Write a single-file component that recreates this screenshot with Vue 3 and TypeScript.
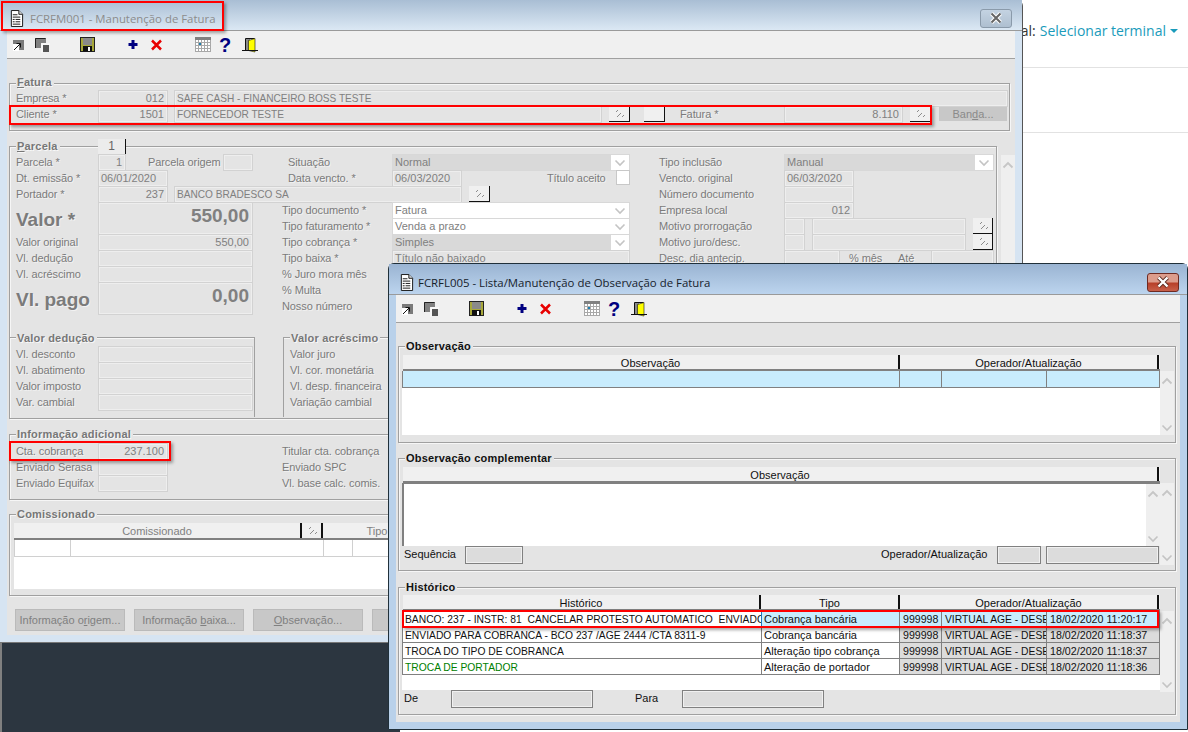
<script setup lang="ts">
import { h } from 'vue'

type Cell = { k: string; w: number; m?: number; t?: string; r?: boolean; grey?: boolean; u?: string; z?: string }
type Row = { big?: boolean; cells: Cell[] }

const L = (t: string, w: number, m = 0): Cell => ({ k: 'lbl', t, w, m })
const F = (t: string, w: number, m = 0, r = false): Cell => ({ k: 'fld', t, w, m, r })
const D = (w: number, m = 0): Cell => ({ k: 'fld dark', w, m })
const S = (t: string, w: number, grey = false): Cell => ({ k: 'sel', t, w, grey })
const B = (m = 0, w = 21): Cell => ({ k: 'pick', w, m })
const R = (...cells: Cell[]): Row => ({ cells })
const Big = (...cells: Cell[]): Row => ({ big: true, cells })
const isCaps = (t = '') => /[A-Z]{2}/.test(t) && t === t.toUpperCase()

function renderCell(c: Cell) {
  const style = { width: c.w + 'px', marginLeft: (c.m ?? 0) + 'px' }
  if (c.k === 'sel') {
    return h('span', { class: ['sel', { grey: c.grey }], style }, [
      h('span', { class: 'sel-txt' }, c.t),
      h('span', { class: 'sel-arrow' }, [h('svg', { width: 12, height: 8 }, [h('use', { href: '#chev-down' })])]),
    ])
  }
  if (c.k === 'pick') {
    return h('span', { class: 'pick', style }, [h('svg', { width: 12, height: 12 }, [h('use', { href: '#hatch' })])])
  }
  if (c.k === 'blank') return h('span', { class: 'pick', style })
  if (c.k === 'check') return h('span', { class: 'check', style })
  if (c.k === 'cmd') return h('span', { class: 'cmd', style }, [c.t, h('u', c.u), c.z])
  return h('span', { class: [c.k, { right: c.r, caps: isCaps(c.t) }], style }, c.t)
}

const FormRows = (p: { rows: Row[] }) =>
  p.rows.map((row) => h('div', { class: ['row', { big: row.big }] }, row.cells.map(renderCell)))

const fatura: Row[] = [
  R(L('Empresa *', 82), F('012', 70, 0, true), F('SAFE CASH - FINANCEIRO BOSS TESTE', 834, 6)),
  R(
    L('Cliente *', 82), F('1501', 70, 0, true), F('FORNECEDOR TESTE', 428, 6), B(7),
    { k: 'blank', w: 21, m: 14 }, L('Fatura *', 104, 15), F('8.110', 119, 0, true), B(7),
    { k: 'cmd', w: 68, m: 8, t: 'Ban', u: 'd', z: 'a...' },
  ),
]
const parcelaTop: Row[] = [
  R(L('Parcela *', 82), F('1', 28, 0, true), L('Parcela origem', 75, 22), F('', 30), L('Situação', 104, 35), S('Normal', 238, true)),
  R(L('Dt. emissão *', 82), F('06/01/2020', 70), L('Data vencto. *', 104, 120), F('06/03/2020', 70), L('Título aceito', 69, 85), { k: 'check', w: 14 }),
  R(L('Portador *', 82), F('237', 70, 0, true), F('BANCO BRADESCO SA', 288, 6), B(7)),
]
const parcelaLeft: Row[] = [
  Big({ k: 'lbl', t: 'Valor *', w: 82 }, F('550,00', 155, 0, true)),
  R(L('Valor original', 82), F('550,00', 155, 0, true)),
  R(L('Vl. dedução', 82), F('', 155)),
  R(L('Vl. acréscimo', 82), F('', 155)),
  Big({ k: 'lbl', t: 'Vl. pago', w: 82 }, F('0,00', 155, 0, true)),
]
const parcelaMid: Row[] = [
  R(L('Tipo documento *', 110), S('Fatura', 238)),
  R(L('Tipo faturamento *', 110), S('Venda a prazo', 238)),
  R(L('Tipo cobrança *', 110), S('Simples', 238, true)),
  R(L('Tipo baixa *', 110), F('Título não baixado', 238)),
  R(L('% Juro mora mês', 110), F('', 70)),
  R(L('% Multa', 110), F('', 70)),
  R(L('Nosso número', 110), F('', 120)),
]
const parcelaRight: Row[] = [
  R(L('Tipo inclusão', 125), S('Manual', 210, true)),
  R(L('Vencto. original', 125), F('06/03/2020', 70)),
  R(L('Número documento', 125), F('', 70)),
  R(L('Empresa local', 125), F('012', 70, 0, true)),
  R(L('Motivo prorrogação', 125), F('', 21), F('', 154, 7), B(7, 20)),
  R(L('Motivo juro/desc.', 125), F('', 21), F('', 154, 7), B(7, 20)),
  R(L('Desc. dia antecip.', 125), F('', 56), L('% mês', 49, 9), L('Até', 33), F('', 63)),
]
const deducao: Row[] = [
  R(L('Vl. desconto', 82), F('', 155)),
  R(L('Vl. abatimento', 82), F('', 155)),
  R(L('Valor imposto', 82), F('', 155)),
  R(L('Var. cambial', 82), F('', 155)),
]
const acrescimo: Row[] = [
  R(L('Valor juro', 103), F('', 155)),
  R(L('Vl. cor. monetária', 103), F('', 155)),
  R(L('Vl. desp. financeira', 103), F('', 155)),
  R(L('Variação cambial', 103), F('', 155)),
]
const info: Row[] = [
  R(L('Cta. cobrança', 82), F('237.100', 70, 0, true), L('Titular cta. cobrança', 110, 114), F('', 200)),
  R(L('Enviado Serasa', 82), F('', 70), L('Enviado SPC', 110, 114), F('', 70)),
  R(L('Enviado Equifax', 82), F('', 70), L('Vl. base calc. comis.', 110, 114), F('', 70)),
]
const seqRow: Row[] = [R(L('Sequência', 61, 2), D(58), L('Operador/Atualização', 116, 358), D(44), D(113, 5))]
const deRow: Row[] = [R(L('De', 47, 2), D(142), L('Para', 47, 42), D(142))]

const tools = [
  { id: 'i-in', m: 0 },
  { id: 'i-cascade', m: 0 },
  { id: 'i-save', m: 23 },
  { id: 'i-plus', m: 22 },
  { id: 'i-x', m: 1 },
  { id: 'i-cal', m: 23 },
  { id: 'i-help', m: -1 },
  { id: 'i-door', m: 2 },
]

const hist = [
  { a: 'BANCO: 237 - INSTR: 81  CANCELAR PROTESTO AUTOMATICO  ENVIADO', b: 'Cobrança bancária', c: '999998', d: 'VIRTUAL AGE - DESE', e: '18/02/2020 11:20:17', sel: true },
  { a: 'ENVIADO PARA COBRANCA - BCO 237 /AGE 2444 /CTA 8311-9', b: 'Cobrança bancária', c: '999998', d: 'VIRTUAL AGE - DESE', e: '18/02/2020 11:18:37' },
  { a: 'TROCA DO TIPO DE COBRANCA', b: 'Alteração tipo cobrança', c: '999998', d: 'VIRTUAL AGE - DESE', e: '18/02/2020 11:18:37' },
  { a: 'TROCA DE PORTADOR', b: 'Alteração de portador', c: '999998', d: 'VIRTUAL AGE - DESE', e: '18/02/2020 11:18:36', green: true },
]
</script>

<template>
  <div class="desk">
    <svg class="defs" width="0" height="0">
      <symbol id="hatch" viewBox="0 0 12 12"><path d="M3 4l2-2M4 9l4-4M9 9l2-2" stroke="#8c8c8c" fill="none" /></symbol>
      <symbol id="chev-down" viewBox="0 0 12 8"><path d="M1.5 1.5L6 6l4.5-4.5" stroke="#c4c4c4" stroke-width="1.600" fill="none" /></symbol>
      <symbol id="chev-up" viewBox="0 0 12 8"><path d="M1.5 6.5L6 2l4.5 4.5" stroke="#c6c6c6" stroke-width="1.800" fill="none" /></symbol>
      <symbol id="doc" viewBox="0 0 16 18">
        <path d="M2.5 .5h8l4 4v13h-12z" fill="#fff" stroke="#111" />
        <path d="M10.5 .5v4h4" fill="#ddd" stroke="#111" />
        <path d="M4 5h5M4 7.5h8M4 10h2M7 10h5M4 12.500h2M7 12.500h5M4 15h8" stroke="#111" />
      </symbol>
      <symbol id="i-in" viewBox="0 0 16 16">
        <rect x="2" y="3" width="11" height="10" fill="#7a7a7a" />
        <rect x="2" y="7" width="6" height="7" fill="#fff" />
        <path d="M3 13l6-6M5.500 6.500H9.500V10.500" stroke="#111" fill="none" />
      </symbol>
      <symbol id="i-cascade" viewBox="0 0 16 16">
        <path d="M1 1h11v5H7v5H1z" fill="#808080" />
        <path d="M1.500 11V1.500h10" stroke="#222" fill="none" />
        <rect x="9" y="8" width="6" height="7" fill="#555" />
        <path d="M8 16V7h8" stroke="#fff" fill="none" />
      </symbol>
      <symbol id="i-save" viewBox="0 0 16 16">
        <rect x=".5" y=".5" width="14" height="14" fill="#a8a83a" stroke="#222" />
        <rect x="3" y="1" width="9" height="7" fill="#8a8a8a" />
        <rect x="3" y="9" width="9" height="5.500" fill="#111" />
        <rect x="8" y="10" width="2" height="4" fill="#fff" />
      </symbol>
      <symbol id="i-plus" viewBox="0 0 16 16"><path d="M8 3v9M3.500 7.500h9" stroke="#000080" stroke-width="3" fill="none" /></symbol>
      <symbol id="i-x" viewBox="0 0 16 16"><path d="M3 3.500l9 9M12 3.500l-9 9" stroke="#e80000" stroke-width="2.500" fill="none" /></symbol>
      <symbol id="i-cal" viewBox="0 0 16 16">
        <rect x="0" y="0" width="16" height="15" fill="#fff" />
        <rect x="0" y="0" width="16" height="3" fill="#808080" />
        <path d="M.5 3v12M3.500 3v12M6.500 3v12M9.500 3v12M12.500 3v12M15.500 3v12M0 5.500h16M0 8.500h16M0 11.500h16M0 14.500h16" stroke="#a8a8a8" fill="none" />
        <rect x="4" y="6" width="2" height="2" fill="#1a7fb0" />
      </symbol>
      <symbol id="i-door" viewBox="0 0 16 16">
        <path d="M3.500 13V1.500h9" stroke="#111" fill="none" />
        <rect x="4" y="2" width="4" height="11" fill="#8a8a8a" />
        <path d="M6.500 3.500l6.500-2V15l-6.500-1.500z" fill="#ffff00" stroke="#111" stroke-width=".6" />
        <path d="M0 13.500h16" stroke="#111" fill="none" />
      </symbol>
    </svg>

    <div class="page">
      <div class="page-row top">
        <span class="term-label">Terminal:</span>
        <span class="term-link">Selecionar terminal</span>
        <span class="caret"></span>
      </div>
      <div class="page-row second"></div>
    </div>
    <div class="dock"></div>

    <!-- back window -->
    <section class="win back">
      <header class="title">
        <svg class="doc-icon" width="15" height="17"><use href="#doc" /></svg>
        <span class="title-text">FCRFM001 - Manutenção de Fatura</span>
        <button class="close">
          <svg width="16" height="12" viewBox="0 0 16 12">
            <path d="M3.500 1.500l9 9M12.500 1.500l-9 9" stroke="#fff" stroke-width="4" fill="none" />
            <path d="M3.500 1.500l9 9M12.500 1.500l-9 9" stroke="#666" stroke-width="2" fill="none" />
          </svg>
        </button>
      </header>
      <div class="toolbar">
        <span v-for="t in tools" :key="t.id" class="tool" :style="{ marginLeft: t.m + 'px' }">
          <span v-if="t.id === 'i-help'" class="help">?</span>
          <svg v-else width="16" height="16"><use :href="'#' + t.id" /></svg>
        </span>
      </div>
      <div class="client">
        <div class="group fatura">
          <span class="legend"><u>F</u>atura</span>
          <FormRows :rows="fatura" />
        </div>

        <div class="parcela-wrap">
          <div class="group parcela">
            <span class="legend"><u>P</u>arcela</span>
            <span class="tab">1</span>
            <div class="parcela-cols">
              <div class="parcela-main">
                <FormRows :rows="parcelaTop" />
                <div class="parcela-lower">
                  <div class="col-left"><FormRows :rows="parcelaLeft" /></div>
                  <div class="col-mid"><FormRows :rows="parcelaMid" /></div>
                </div>
              </div>
              <div class="col-right"><FormRows :rows="parcelaRight" /></div>
            </div>
            <div class="subs">
              <div class="sub deducao">
                <span class="legend">Valor dedução</span>
                <FormRows :rows="deducao" />
              </div>
              <div class="sub acrescimo">
                <span class="legend">Valor acréscimo</span>
                <FormRows :rows="acrescimo" />
              </div>
            </div>
          </div>
          <div class="vscroll back-scroll">
            <svg width="12" height="8"><use href="#chev-up" /></svg>
          </div>
        </div>

        <div class="group info">
          <span class="legend">Informação adicional</span>
          <FormRows :rows="info" />
        </div>

        <div class="group comis">
          <span class="legend">Comissionado</span>
          <div class="comis-head">
            <span class="ch-name">Comissionado</span>
            <span class="ch-pick"><svg width="12" height="12"><use href="#hatch" /></svg></span>
            <span class="ch-tipo">Tipo</span>
          </div>
          <div class="comis-body">
            <div class="comis-row"><span></span><span></span><span></span><span></span></div>
          </div>
        </div>

        <div class="cmds">
          <button class="cmd-btn">Informação o<u>r</u>igem...</button>
          <button class="cmd-btn">Informação <u>b</u>aixa...</button>
          <button class="cmd-btn"><u>O</u>bservação...</button>
          <button class="cmd-btn">Informação...</button>
        </div>
      </div>
      <i class="mark m-title"></i>
      <i class="mark m-client"></i>
      <i class="mark m-cta"></i>
    </section>

    <!-- front window -->
    <section class="win front">
      <header class="title">
        <svg class="doc-icon" width="15" height="17"><use href="#doc" /></svg>
        <span class="title-text">FCRFL005 - Lista/Manutenção de Observação de Fatura</span>
        <button class="close">
          <svg width="16" height="12" viewBox="0 0 16 12">
            <path d="M3.500 1.500l9 9M12.500 1.500l-9 9" stroke="#5a2a20" stroke-width="4" fill="none" />
            <path d="M3.500 1.500l9 9M12.500 1.500l-9 9" stroke="#fff" stroke-width="2.400" fill="none" />
          </svg>
        </button>
      </header>
      <div class="toolbar">
        <span v-for="t in tools" :key="t.id" class="tool" :style="{ marginLeft: t.m + 'px' }">
          <span v-if="t.id === 'i-help'" class="help">?</span>
          <svg v-else width="16" height="16"><use :href="'#' + t.id" /></svg>
        </span>
      </div>
      <div class="client">
        <div class="group obs">
          <span class="legend">Observação</span>
          <div class="grid-wrap">
            <div class="grid">
              <div class="thead">
                <span class="th t-fill">Observação</span>
                <span class="th t-op">Operador/Atualização</span>
              </div>
              <div class="tr sel-row obs-row">
                <span class="td t-fill"></span><span class="td c-code"></span><span class="td c-name"></span><span class="td c-date"></span>
              </div>
              <div class="grid-white obs-white"></div>
            </div>
            <div class="vscroll">
              <svg width="12" height="8"><use href="#chev-up" /></svg>
              <svg width="12" height="8"><use href="#chev-down" /></svg>
            </div>
          </div>
        </div>

        <div class="group comp">
          <span class="legend">Observação complementar</span>
          <div class="grid-wrap">
            <div class="grid">
              <div class="thead"><span class="th t-all">Observação</span></div>
              <div class="memo">
                <div class="memo-scroll vscroll">
                  <svg width="12" height="8"><use href="#chev-up" /></svg>
                  <svg width="12" height="8"><use href="#chev-down" /></svg>
                </div>
              </div>
              <FormRows :rows="seqRow" />
            </div>
            <div class="vscroll">
              <svg width="12" height="8"><use href="#chev-up" /></svg>
              <svg width="12" height="8"><use href="#chev-down" /></svg>
            </div>
          </div>
        </div>

        <div class="group histo">
          <span class="legend">Histórico</span>
          <div class="grid-wrap">
            <div class="grid">
              <div class="thead">
                <span class="th t-hist">Histórico</span>
                <span class="th t-tipo">Tipo</span>
                <span class="th t-op">Operador/Atualização</span>
              </div>
              <div v-for="r in hist" :key="r.e + r.b" class="tr" :class="{ 'sel-row': r.sel, green: r.green }">
                <span class="td c-hist">{{ r.a }}</span>
                <span class="td c-tipo">{{ r.b }}</span>
                <span class="td c-code ro">{{ r.c }}</span>
                <span class="td c-name ro">{{ r.d }}</span>
                <span class="td c-date ro">{{ r.e }}</span>
              </div>
              <div class="grid-white histo-white"></div>
              <FormRows :rows="deRow" />
              <i class="mark m-row"></i>
            </div>
            <div class="vscroll histo-scroll">
              <svg width="12" height="8"><use href="#chev-up" /></svg>
              <svg width="12" height="8"><use href="#chev-down" /></svg>
            </div>
          </div>
        </div>
      </div>
    </section>
  </div>
</template>

<style scoped>
.desk {
  position: relative;
  width: 1188px;
  height: 732px;
  overflow: hidden;
  background: #fff;
  font-family: "Liberation Sans", Arial, sans-serif;
  font-size: 11px;
}
.defs { position: absolute; }
.page-row { border-bottom: 1px solid #e2e2e2; display: flex; align-items: center; justify-content: flex-end; }
.page-row.top { height: 68px; padding: 0 10px 6px 0; box-sizing: border-box; font: 14px "Open Sans", sans-serif; }
.page-row.second { height: 64px; }
.term-label { color: #333; margin-right: 4px; }
.term-link { color: #1a9bbb; }
.caret { width: 0; height: 0; margin-left: 4px; border: 4px solid transparent; border-top: 4px solid #1a9bbb; border-bottom: 0; }
.dock { position: absolute; left: 0; top: 642px; width: 400px; height: 90px; background: #2c3640; border-left: 2px solid #808080; box-sizing: border-box; }

.win { position: absolute; box-sizing: border-box; display: flex; flex-direction: column; }
.win.back { left: 0; top: 0; width: 1023px; height: 643px; background: #d6e4f2; border-right: 1px solid #555; border-bottom: 1px solid #777; border-top-right-radius: 6px; }
.win.front { left: 388px; top: 263px; width: 800px; height: 467px; background: #b9d1ea; border: 1px solid #20303a; border-radius: 6px 6px 0 0; }

.title { flex: none; display: flex; align-items: center; box-sizing: border-box; border-bottom: 1px solid #9a9a9a; padding-top: 6px; }
.back .title { height: 31px; padding-left: 9px; padding-right: 10px; background: linear-gradient(#a9bed4, #dbe8f4); }
.front .title { height: 31px; padding-left: 10px; padding-right: 8px; background: linear-gradient(#9ab4d2, #bcd4ee); }
.title-text { flex: 1; margin-left: 6px; font: 11.400px "Open Sans", sans-serif; }
.back .title-text { color: #8c8c8c; }
.front .title-text { color: #16222c; margin-left: 4px; }
.close { width: 32px; height: 19px; padding: 0; display: flex; align-items: center; justify-content: center; border-radius: 3px; }
.back .close { background: linear-gradient(#c4d3e2, #aebfd0); border: 1px solid #8a9aaa; }
.front .close { background: linear-gradient(#dc9c8c 0 45%, #b8402a 55%, #c8604a); border: 1px solid #6e2a22; }

.toolbar { flex: none; height: 28px; margin: 0 7px; box-sizing: border-box; padding: 6px 0 0 4px; display: flex; background: #f0f0f0; border-bottom: 1px solid #a0a0a0; }
.tool { flex: none; width: 16px; height: 16px; margin-right: 7px; display: block; }
.tool svg { display: block; }
.help { display: block; font: bold 20px/16px "Liberation Sans", sans-serif; color: #000080; text-align: center; }

.client { flex: 1; min-height: 0; margin: 0 7px 7px; padding-left: 2px; background: #e4e4e4; position: relative; }

.group { position: relative; box-sizing: border-box; border: 1px solid #a0a0a0; box-shadow: inset 1px 1px 0 #f6f6f6, 1px 1px 0 #f6f6f6; }
.legend { position: absolute; top: -8px; left: 6px; padding: 0 2px 0 1px; background: #e4e4e4; font: bold 11px/14px "Liberation Sans", sans-serif; letter-spacing: .2px; white-space: nowrap; }
.sub .legend { top: -7px; }
.fatura .legend { top: -9px; }
.back .legend { color: #777; text-shadow: 1px 1px 0 #f8f8f8; }
.front .legend { color: #111; }

.fatura { width: 1001px; height: 48px; margin-top: 24px; padding: 6px 0 0 6px; }
.parcela-wrap { display: flex; margin-top: 15px; }
.parcela { width: 988px; height: 273px; padding: 7px 0 0 6px; }
.tab { position: absolute; left: 88px; top: -8px; width: 28px; height: 15px; box-sizing: border-box; background: #ececec; border-right: 1px solid #111; color: #666; text-align: center; line-height: 15px; font-size: 12px; }
.parcela-cols { display: flex; }
.parcela-main { width: 614px; flex: none; }
.parcela-lower { display: flex; }
.col-left { width: 266px; flex: none; }
.col-mid { width: 348px; flex: none; }
.col-right { margin-left: 29px; flex: none; width: 335px; }
.subs { display: flex; margin: 23px 0 0 -6px; }
.sub { position: relative; height: 80px; box-sizing: border-box; padding: 8px 0 0 6px; border-top: 1px solid #a0a0a0; box-shadow: inset 0 1px 0 #f6f6f6; }
.deducao { width: 245px; border-right: 1px solid #a0a0a0; }
.acrescimo { margin-left: 28px; width: 500px; border-left: 1px solid #a0a0a0; }
.back-scroll { margin: 9px 0 0 4px; width: 14px; height: 120px; justify-content: flex-start; }

.info { width: 1001px; height: 66px; margin-top: 15px; padding: 8px 0 0 6px; }
.comis { width: 1001px; height: 82px; margin-top: 14px; padding: 8px 0 0 4px; }
.comis-head { display: flex; height: 15px; background: #f0f0f0; border-bottom: 2px solid #808080; box-sizing: content-box; margin-right: 4px; color: #808080; line-height: 16px; text-align: center; }
.ch-name { width: 286px; }
.ch-pick { width: 19px; border-left: 2px solid #111; border-right: 2px solid #111; display: flex; align-items: center; justify-content: center; }
.ch-tipo { width: 108px; }
.comis-body { height: 49px; background: #fff; margin-right: 4px; }
.comis-row { display: flex; height: 17px; border: 1px solid #d0d0d0; border-top: 0; box-sizing: border-box; }
.comis-row span { border-right: 1px solid #d0d0d0; }
.comis-row span:nth-child(1) { width: 55px; }
.comis-row span:nth-child(2) { width: 252px; }
.comis-row span:nth-child(3) { width: 28px; }
.comis-row span:nth-child(4) { width: 100px; }

.cmds { display: flex; gap: 9px; margin: 13px 0 0 6px; }
.cmd-btn { flex: none; width: 110px; height: 22px; padding: 0; background: #c8c8c8; border: 1px solid #bababa; color: #808080; font: 11px "Liberation Sans", sans-serif; }

.mark { position: absolute; box-sizing: border-box; border: 2px solid #f00; box-shadow: 2px 2px 3px rgba(0, 0, 0, .35); pointer-events: none; }
.m-title { left: 1px; top: 1px; width: 223px; height: 30px; }
.m-client { left: 9px; top: 105px; width: 923px; height: 20px; }
.m-cta { left: 9px; top: 441px; width: 162px; height: 20px; }
.m-row { left: 0; top: 15px; width: 757px; height: 18px; }

.obs { width: 778px; height: 97px; margin-top: 23px; padding: 8px 0 0 3px; }
.comp { width: 778px; height: 113px; margin-top: 15px; padding: 8px 0 0 3px; }
.histo { width: 778px; height: 128px; margin-top: 16px; padding: 7px 0 0 3px; }
.grid-wrap { display: flex; }
.grid { position: relative; width: 758px; flex: none; }
.thead { display: flex; height: 16px; margin-left: 1px; box-sizing: border-box; background: #f0f0f0; border-bottom: 2px solid #808080; color: #111; }
.th { box-sizing: border-box; text-align: center; line-height: 16px; border-right: 2px solid #111; }
.t-fill { width: 497px; }
.t-hist { width: 358px; }
.t-tipo { width: 139px; }
.t-op { width: 259px; }
.t-all { width: 756px; }
.tr { display: flex; height: 16px; box-sizing: border-box; border-left: 1px solid #808080; border-bottom: 1px solid #808080; background: #fff; color: #111; line-height: 17px; }
.td { box-sizing: border-box; flex: none; overflow: hidden; white-space: pre; padding-left: 2px; border-right: 1px solid #808080; }
.c-hist { width: 359px; font-size: 10.300px; }
.c-tipo { width: 138px; }
.c-code { width: 42px; padding-left: 3px; font-size: 10.600px; }
.c-name { width: 105px; padding-left: 3px; font-size: 10.300px; }
.c-date { width: 113px; padding-left: 3px; font-size: 10.700px; }
.ro { background: #dcdcdc; }
.sel-row .td { background: #c8ecfd; }
.sel-row .c-hist { background: #fff; }
.sel-row .c-tipo { border-left: 1px solid #1a78c2; margin-left: -1px; width: 139px; }
.obs-row { height: 17px; }
.green .c-hist { color: #008000; }
.grid-white { background: #fff; }
.obs-white { height: 47px; }
.histo-white { height: 15px; }
.memo { display: flex; justify-content: flex-end; height: 63px; background: #fff; border-top: 1px solid #808080; border-left: 2px solid #808080; box-sizing: border-box; }
.memo-scroll { width: 15px; height: 100%; }
.vscroll { flex: none; width: 14px; box-sizing: border-box; padding: 6px 1px 3px; display: flex; flex-direction: column; justify-content: space-between; background: #efefef; }
.vscroll svg { display: block; }
.grid-wrap > .vscroll { margin-top: 16px; }
.obs .vscroll { height: 64px; }
.comp .grid-wrap > .vscroll { height: 82px; }
.histo-scroll { height: 81px; }
</style>

<style>
html, body { margin: 0; padding: 0; }
.row { display: flex; height: 16px; font: 11px "Liberation Sans", Arial, sans-serif; }
.row.big { height: 32px; }
.lbl, .fld, .sel, .pick, .check, .cmd { flex: none; box-sizing: border-box; white-space: nowrap; }
.lbl { line-height: 16px; color: #7b7b7b; text-shadow: 1px 1px 0 #f2f2f2; letter-spacing: -.1px; }
.row.big .lbl { font: bold 19px/36px "Liberation Sans", sans-serif; letter-spacing: 0; }
.fld { height: 17px; border: 1px solid #d2d2d2; box-shadow: inset 0 0 0 1px #eeeeee; background: #e4e4e4; color: #808080; line-height: 15px; padding: 0 3px 0 2px; overflow: hidden; }
.fld.right { text-align: right; }
.fld.caps { font-size: 10.100px; }
.row.big .fld { height: 33px; font: bold 19px/25px "Liberation Sans", sans-serif; }
.fld.dark { height: 18px; background: #dcdcdc; border: 1px solid #808080; box-shadow: inset 0 0 0 1px #f0f0f0; }
.sel { display: flex; height: 17px; border: 1px solid #d8d8d8; background: #fff; color: #808080; line-height: 15px; }
.sel-txt { flex: 1; padding-left: 2px; overflow: hidden; }
.sel.grey .sel-txt { background: #d9d9d9; }
.sel-arrow { flex: none; width: 18px; display: flex; align-items: center; justify-content: center; background: #fff; }
.pick { height: 16px; display: flex; align-items: center; justify-content: center; background: #f0f0f0; border-right: 1px solid #111; border-bottom: 1px solid #111; }
.check { height: 15px; background: #fff; border: 1px solid #c8c8c8; }
.cmd { height: 14px; margin-top: 1px; background: #c8c8c8; color: #8a8a8a; text-align: center; line-height: 14px; }
.front .lbl { color: #111; text-shadow: none; letter-spacing: 0; }
.front .row { height: 18px; }
</style>
